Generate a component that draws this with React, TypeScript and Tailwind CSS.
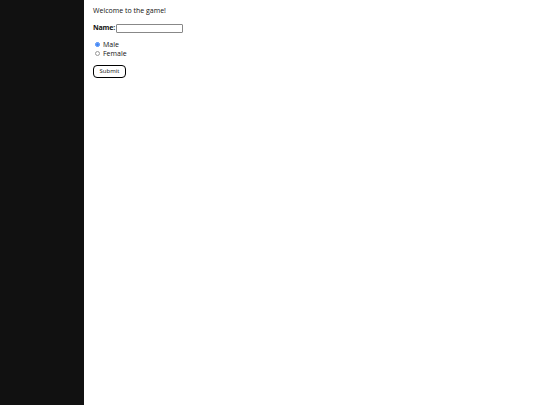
export default function App() {
  return (
    <div className="flex h-[405px] w-[540px] bg-white" style={{ fontFamily: '"Open Sans", sans-serif' }}>
      <div className="w-[84px] shrink-0 bg-[#111111]" />
      <div className="flex flex-col pl-[9px] pt-[6px] text-[7px] text-[#111]">
        <p className="leading-[10px]">Welcome to the game!</p>
        <div className="mt-[7px] flex items-center">
          <span className="font-bold tracking-[-0.2px]">Name:</span>
          <input type="text" className="ml-[1px] h-[9px] w-[67px] rounded-[1px] border border-[#888]" />
        </div>
        <div className="mt-[6px] flex flex-col leading-[9px]">
          <label className="flex items-center gap-[3px]">
            <span className="ml-[2px] flex h-[5px] w-[5px] items-center justify-center rounded-full border border-[#3b82f6]">
              <span className="h-[3px] w-[3px] rounded-full bg-[#3b82f6]" />
            </span>
            Male
          </label>
          <label className="flex items-center gap-[3px]">
            <span className="ml-[2px] h-[5px] w-[5px] rounded-full border border-[#999]" />
            Female
          </label>
        </div>
        <button className="mt-[7px] h-[13px] w-[33px] rounded-[4px] border border-black text-[6px]">Submit</button>
      </div>
    </div>
  );
}
